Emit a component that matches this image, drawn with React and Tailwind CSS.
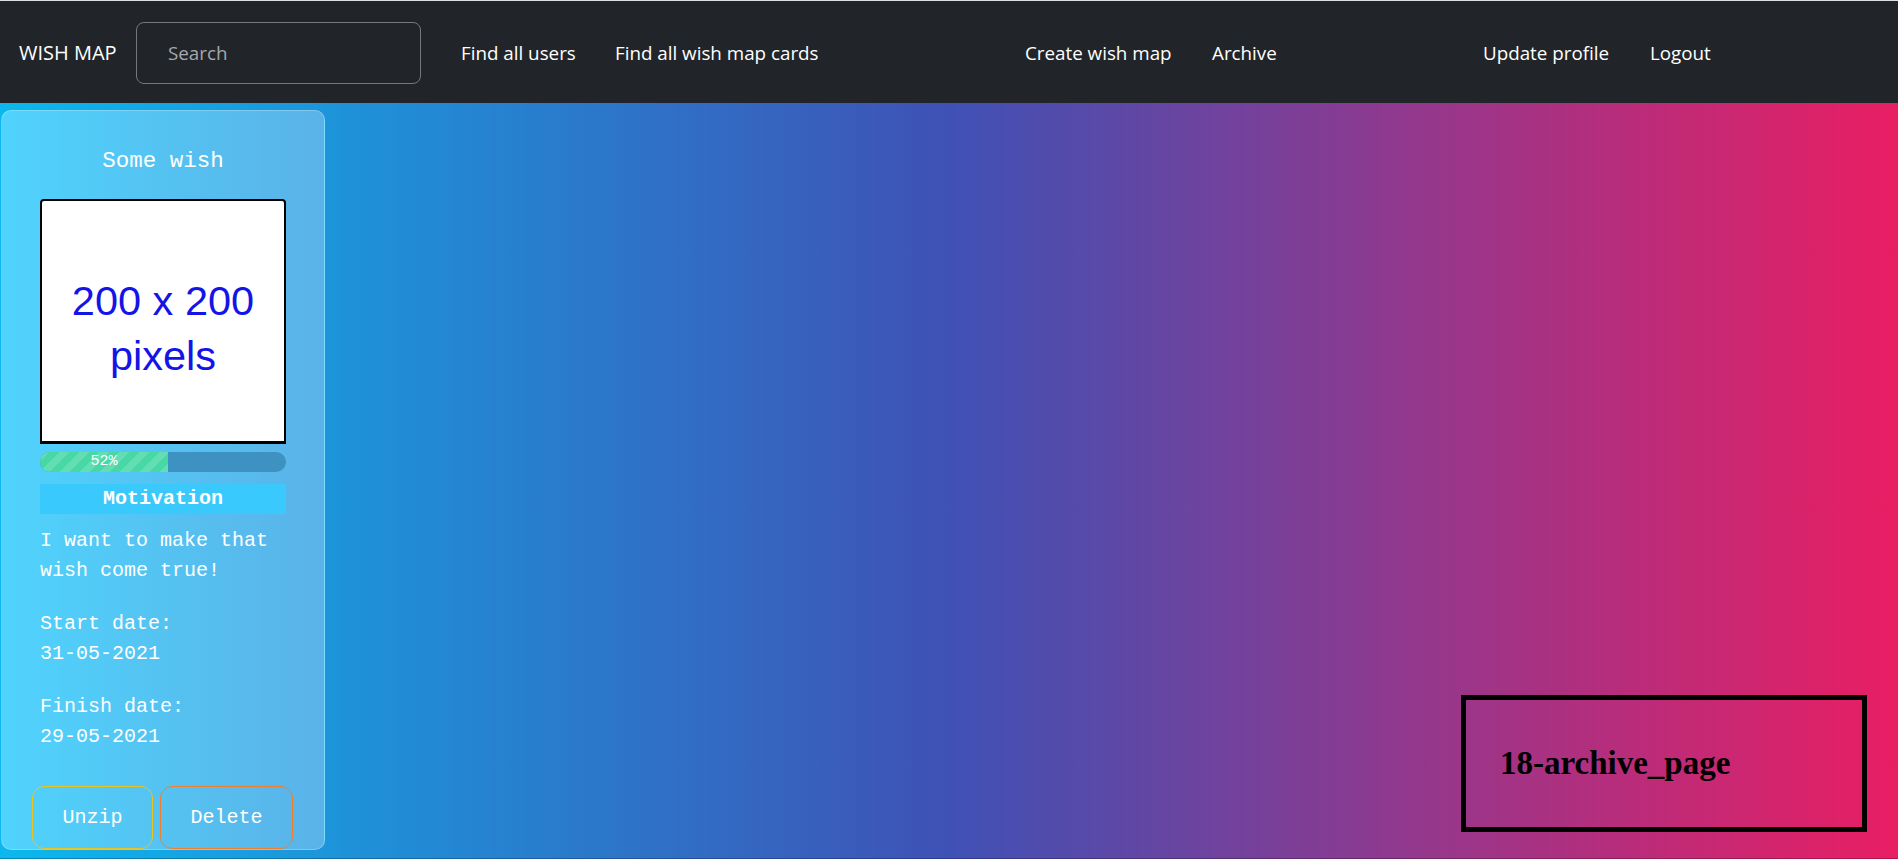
import React from "react";

const sans = "font-['Open_Sans','Noto_Sans',sans-serif]";

function NavLink({ children, w }) {
  return (
    <a className={`block pl-[20px] text-[18.8px] text-white whitespace-nowrap ${w}`}>{children}</a>
  );
}

export default function App() {
  return (
    <div className="relative flex h-[859px] flex-col overflow-hidden bg-[linear-gradient(to_right,#0bb8ee,#3f51b5,#e91e63)]">
      <nav className={`flex h-[103px] shrink-0 items-center border-t border-[#dcdee0] bg-[#212529] pt-[2px] ${sans}`}>
        <span className="ml-[19px] w-[117px] text-[20px] text-white">WISH MAP</span>
        <div className="flex h-[62px] w-[285px] items-center rounded-[8px] border border-[#75787c] pl-[31px] text-[18.8px] text-[#a6a9ad]">
          Search
        </div>
        <div className="ml-[20px] flex">
          <NavLink w="w-[154px]">Find all users</NavLink>
          <NavLink w="w-[244px]">Find all wish map cards</NavLink>
        </div>
        <div className="ml-[166px] flex">
          <NavLink w="w-[187px]">Create wish map</NavLink>
          <NavLink w="w-[105px]">Archive</NavLink>
        </div>
        <div className="ml-[166px] flex">
          <NavLink w="w-[167px]">Update profile</NavLink>
          <NavLink w="w-[103px]">Logout</NavLink>
        </div>
      </nav>

      <main className="flex-1 border-b border-black/25 pl-[1px] pt-[7px]">
        <div className="flex h-[740px] w-[324px] flex-col overflow-hidden rounded-[10px] border border-white/25 bg-[linear-gradient(to_right,#4fd3fc,#5ab2e8)] px-[38px] pt-[35px] font-['Liberation_Mono','Courier_New',monospace] text-white">
          <h5 className="text-center text-[22.5px] leading-[30px]">Some wish</h5>

          <div className="mt-[23px] flex h-[245px] w-[246px] shrink-0 flex-col items-center justify-center rounded-t-[4px] border-[2px] border-b-[3px] border-black bg-white pt-[13px] font-['Liberation_Sans',Arial,sans-serif] text-[41.5px] leading-[55px] text-[#1414e6]">
            <span>200 x 200</span>
            <span>pixels</span>
          </div>

          <div className="mt-[8px] flex h-[20px] w-[246px] shrink-0 overflow-hidden rounded-full bg-[#3d92c1]">
            <div className="flex w-[52%] items-center justify-center bg-[#48d8a6] bg-[linear-gradient(135deg,rgba(255,255,255,.15)_25%,transparent_25%,transparent_50%,rgba(255,255,255,.15)_50%,rgba(255,255,255,.15)_75%,transparent_75%,transparent)] bg-[length:20px_20px] text-[15px] leading-[20px] text-white">
              52%
            </div>
          </div>

          <div className="mt-[12px] flex h-[30px] w-[246px] shrink-0 items-center justify-center bg-[#3ac9fd] text-[20px] font-bold">
            Motivation
          </div>

          <p className="mt-[12px] text-[20px] leading-[30px]">I want to make that wish come true!</p>
          <p className="mt-[23px] text-[20px] leading-[30px]">
            Start date:
            <br />
            31-05-2021
          </p>
          <p className="mt-[23px] text-[20px] leading-[30px]">
            Finish date:
            <br />
            29-05-2021
          </p>

          <div className="-ml-[8px] mt-auto flex gap-[7px]">
            <button className="flex h-[63px] w-[121px] shrink-0 items-center justify-center rounded-[12px] border border-[#eec21c] text-[20px] text-white">
              Unzip
            </button>
            <button className="flex h-[63px] w-[133px] shrink-0 items-center justify-center rounded-[12px] border border-[#f07e2a] text-[20px] text-white">
              Delete
            </button>
          </div>
        </div>
      </main>

      <div className="absolute bottom-[27px] right-[31px] flex h-[137px] w-[406px] items-center border-[5px] border-black pl-[34px]">
        <h2 className="font-['Liberation_Serif','Times_New_Roman',serif] text-[33px] font-bold leading-none text-black">
          18-archive_page
        </h2>
      </div>
    </div>
  );
}
